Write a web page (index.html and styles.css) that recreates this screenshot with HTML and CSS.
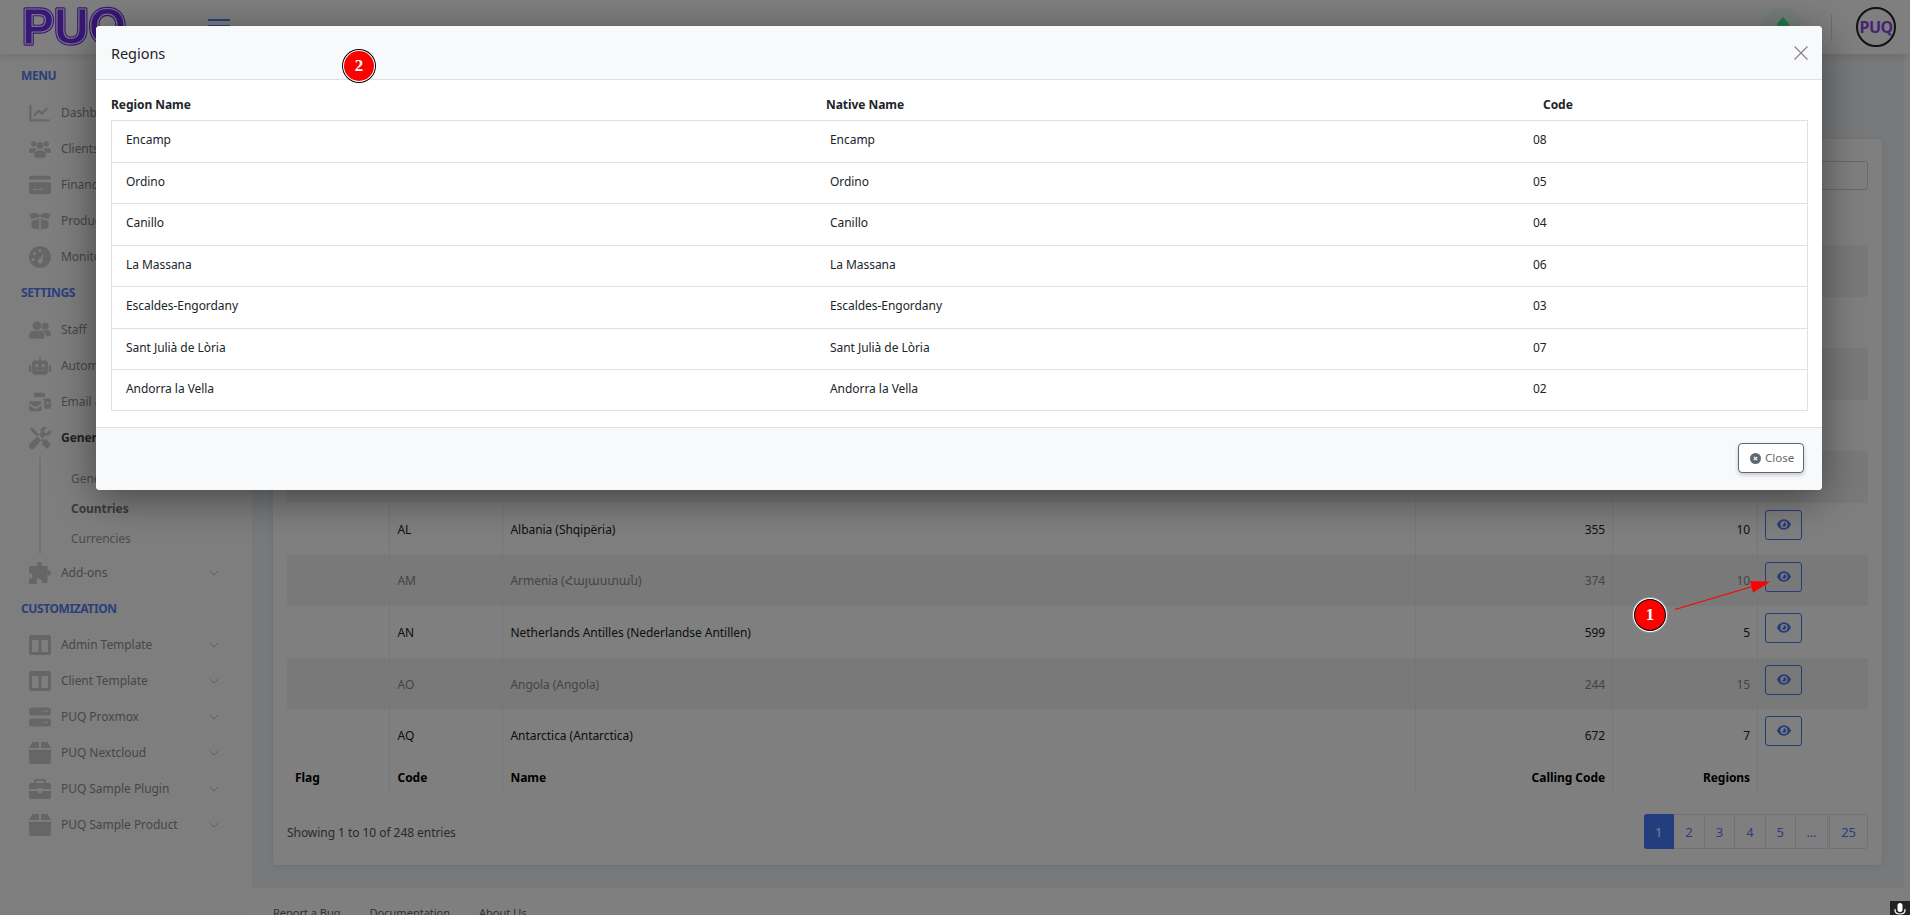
FILE: index.html
```html
<!DOCTYPE html>
<html lang="en">
<head>
<meta charset="utf-8">
<title>Countries</title>
<link rel="stylesheet" href="styles.css">
</head>
<body>
<svg class="sprite" aria-hidden="true">
  <symbol id="i-chart" viewBox="0 0 24 20"><path d="M1.500 1v17h21" fill="none" stroke="currentColor" stroke-width="2.400"/><path d="M5.500 13l5-5.500 3.500 3 6-6" fill="none" stroke="currentColor" stroke-width="2.400"/></symbol>
  <symbol id="i-users" viewBox="0 0 28 22"><circle cx="6" cy="4.500" r="3.400"/><circle cx="22" cy="4.500" r="3.400"/><circle cx="14" cy="6.500" r="4.400"/><path d="M0 14q0-4 4-4h4q1 0 2 1-3 2-3.500 5H1q-1 0-1-1zM28 14q0-4-4-4h-4q-1 0-2 1 3 2 3.500 5H27q1 0 1-1zM6.500 20q0-7 6-7h3q6 0 6 7 0 2-2 2h-11q-2 0-2-2z"/></symbol>
  <symbol id="i-card" viewBox="0 0 24 20"><path d="M0 3q0-3 3-3h18q3 0 3 3v1H0zM0 7h24v10q0 3-3 3H3q-3 0-3-3zM4 14v1.500h5V14zM11 14v1.500h4V14z" fill-rule="evenodd"/></symbol>
  <symbol id="i-box" viewBox="0 0 26 20"><path d="M0 2l7-2 6 3 6-3 7 2-3 6-10-3-10 3zM3 10l9-3v13l-7-1q-2 0-2-2zM23 10l-9-3v13l7-1q2 0 2-2z"/></symbol>
  <symbol id="i-gauge" viewBox="0 0 22 22"><path fill-rule="evenodd" d="M11 0a11 11 0 1 1 0 22a11 11 0 0 1 0-22zM11 3a1.500 1.500 0 1 0 0 3a1.500 1.500 0 0 0 0-3zM5.500 6a1.500 1.500 0 1 0 0 3a1.500 1.500 0 0 0 0-3zM4 12a1.500 1.500 0 1 0 0 3a1.500 1.500 0 0 0 0-3zM15 6l-3.800 6.500a2.500 2.500 0 1 0 2 1z"/></symbol>
  <symbol id="i-staff" viewBox="0 0 28 22"><circle cx="10" cy="5.500" r="5.500"/><circle cx="20.500" cy="6" r="4.500"/><path d="M0 19q0-7 6-7h8q6 0 6 7v1q0 2-2 2H2q-2 0-2-2zM17 12q1-1 3-1h3q5 0 5 6v1q0 1-1 1h-5q0-4-5-7z"/></symbol>
  <symbol id="i-robot" viewBox="0 0 28 22"><path fill-rule="evenodd" d="M13 0h2v4h6q3 0 3 3v12q0 3-3 3H7q-3 0-3-3V7q0-3 3-3h6zM10 8.500a2 2 0 1 0 0 4a2 2 0 0 0 0-4zM18 8.500a2 2 0 1 0 0 4a2 2 0 0 0 0-4zM9 16v1.500h2V16zM13 16v1.500h2V16zM17 16v1.500h2V16z"/><path d="M0 11q0-2 2-2h.800v10H2q-2 0-2-2zM28 11q0-2-2-2h-.800v10H26q2 0 2-2z"/></symbol>
  <symbol id="i-mail" viewBox="0 0 26 22"><path d="M6 0h11q2 0 2 2v3H6V2q0-2 0-2zM15 7h9q2 0 2 2v8q0 2-2 2h-6v-9q0-2-3-3zM21 11v2.500h2.500V11z"/><path d="M0 12q0-2 2-2h11q2 0 2 2v.500L7.500 17 0 12.500zM0 15l7.500 4.500L15 15v5q0 2-2 2H2q-2 0-2-2z"/></symbol>
  <symbol id="i-tools" viewBox="0 0 24 24"><path d="M1 0l4 2 11 12 3-1 5 6-4 5-6-5 1-3L3 5zM23 3l-3.500 3.500-2.500-.5-.500-2.500L20 0q-4-1-6 1-2 2-1 5L0 19q-1 2 1 4 2 2 4 1L18 9q4 1 5-1 1.500-2 0-5z"/></symbol>
  <symbol id="i-puzzle" viewBox="0 0 22 22"><path d="M8 2q0-2 2.500-2T13 2q0 1-.500 2h5q1 0 1 1v4q1-1 2-.500 1.500.500 1.500 2.500t-1.500 2.500q-1 .500-2-.500v7q0 1-1 1h-5q1-1 .500-2T10 16.500 7.500 18t.500 4H1q-1 0-1-1v-5q1 1 2 .500T3.500 14 2 11.500 0 12V5q0-1 1-1h7.500Q8 3 8 2z"/></symbol>
  <symbol id="i-columns" viewBox="0 0 22 20"><path fill-rule="evenodd" d="M2 0h18q2 0 2 2v16q0 2-2 2H2q-2 0-2-2V2q0-2 2-2zM3 5v12h6.500V5zM12.500 5v12H19V5z"/></symbol>
  <symbol id="i-server" viewBox="0 0 22 19"><path fill-rule="evenodd" d="M3 0h16q3 0 3 3v2q0 3-3 3H3Q0 8 0 5V3q0-3 3-3zM14 3v1.500h1.500V3zM17 3v1.500h1.500V3zM3 11h16q3 0 3 3v2q0 3-3 3H3q-3 0-3-3v-2q0-3 3-3zM14 14v1.500h1.500V14zM17 14v1.500h1.500V14z"/></symbol>
  <symbol id="i-pack" viewBox="0 0 20 20"><path d="M3 0h6v5.500H0zM11 0h6l3 5.500h-9zM0 7h20v11q0 2-2 2H2q-2 0-2-2z"/></symbol>
  <symbol id="i-brief" viewBox="0 0 22 20"><path fill-rule="evenodd" d="M7 0h8q2 0 2 2v2h3q2 0 2 2v4H13V9H9v1H0V6q0-2 2-2h3V2q0-2 2-2zM7 2v2h8V2zM0 12h9v2h4v-2h9v6q0 2-2 2H2q-2 0-2-2z"/></symbol>
  <symbol id="i-eye" viewBox="0 0 16 12"><path fill-rule="evenodd" d="M8 0c3.700 0 6.600 2.500 8 6-1.400 3.500-4.300 6-8 6S1.400 9.500 0 6c1.400-3.500 4.300-6 8-6zM8 2a4 4 0 1 0 0 8a4 4 0 0 0 0-8zM8 3.500a2.500 2.500 0 1 1-2.400 3.200c.9.300 2.500-.6 2-3.200z"/></symbol>
  <symbol id="i-chev" viewBox="0 0 10 6"><path d="M1 1l4 4 4-4" fill="none" stroke="currentColor" stroke-width="1"/></symbol>
</svg>

<div class="app">
  <header class="topbar">
    <div class="brand">
      <svg class="logo" viewBox="0 0 110 38"><text class="logo-outer" x="1" y="36" textLength="104" lengthAdjust="spacingAndGlyphs">PUQ</text><text class="logo-inner" x="1" y="36" textLength="104" lengthAdjust="spacingAndGlyphs">PUQ</text></svg>
      <button class="burger" aria-label="Menu"><span></span><span></span><span></span></button>
    </div>
    <div class="top-actions">
      <div class="status"><svg class="status-drop" viewBox="0 0 12 14"><path d="M6 0C8 3 12 5 12 9a6 5 0 0 1-12 0C0 5 4 3 6 0z"/></svg></div>
      <div class="divider"></div>
      <div class="avatar">PUQ</div>
    </div>
  </header>

  <aside class="sidebar">
    <div class="nav-title first">MENU</div>
    <a class="nav-item"><svg class="nav-icon"><use href="#i-chart"/></svg>Dashboard</a>
    <a class="nav-item"><svg class="nav-icon"><use href="#i-users"/></svg>Clients</a>
    <a class="nav-item"><svg class="nav-icon"><use href="#i-card"/></svg>Finance</a>
    <a class="nav-item"><svg class="nav-icon"><use href="#i-box"/></svg>Products</a>
    <a class="nav-item"><svg class="nav-icon"><use href="#i-gauge"/></svg>Monitoring</a>
    <div class="nav-title settings">SETTINGS</div>
    <a class="nav-item"><svg class="nav-icon"><use href="#i-staff"/></svg>Staff</a>
    <a class="nav-item"><svg class="nav-icon"><use href="#i-robot"/></svg>Automation</a>
    <a class="nav-item"><svg class="nav-icon"><use href="#i-mail"/></svg>Email &amp; Notifications</a>
    <a class="nav-item active"><svg class="nav-icon"><use href="#i-tools"/></svg>General</a>
    <div class="subnav">
      <a class="sub-item">General</a>
      <a class="sub-item active">Countries</a>
      <a class="sub-item">Currencies</a>
    </div>
    <a class="nav-item"><svg class="nav-icon"><use href="#i-puzzle"/></svg>Add-ons<svg class="chev"><use href="#i-chev"/></svg></a>
    <div class="nav-title">CUSTOMIZATION</div>
    <a class="nav-item"><svg class="nav-icon"><use href="#i-columns"/></svg>Admin Template<svg class="chev"><use href="#i-chev"/></svg></a>
    <a class="nav-item"><svg class="nav-icon"><use href="#i-columns"/></svg>Client Template<svg class="chev"><use href="#i-chev"/></svg></a>
    <a class="nav-item"><svg class="nav-icon"><use href="#i-server"/></svg>PUQ Proxmox<svg class="chev"><use href="#i-chev"/></svg></a>
    <a class="nav-item"><svg class="nav-icon"><use href="#i-pack"/></svg>PUQ Nextcloud<svg class="chev"><use href="#i-chev"/></svg></a>
    <a class="nav-item"><svg class="nav-icon"><use href="#i-brief"/></svg>PUQ Sample Plugin<svg class="chev"><use href="#i-chev"/></svg></a>
    <a class="nav-item"><svg class="nav-icon"><use href="#i-pack"/></svg>PUQ Sample Product<svg class="chev"><use href="#i-chev"/></svg></a>
  </aside>

  <div class="main">
    <main class="content">
      <section class="card">
        <div class="search-row"><input class="search" type="text" aria-label="Search"></div>
        <table class="countries">
          <colgroup><col class="c-flag"><col class="c-code"><col class="c-name"><col class="c-call"><col class="c-reg"><col class="c-act"></colgroup>
          <thead><tr><th>Flag</th><th>Code</th><th>Name</th><th class="num">Calling Code</th><th class="num">Regions</th><th></th></tr></thead>
          <tbody>
            <tr><td></td><td>AD</td><td>Andorra (Andorra)</td><td class="num">376</td><td class="num">7</td><td class="act"><button class="eye-btn"><svg class="eye"><use href="#i-eye"/></svg></button></td></tr>
            <tr><td></td><td>AE</td><td>United Arab Emirates</td><td class="num">971</td><td class="num">7</td><td class="act"><button class="eye-btn"><svg class="eye"><use href="#i-eye"/></svg></button></td></tr>
            <tr><td></td><td>AF</td><td>Afghanistan</td><td class="num">93</td><td class="num">34</td><td class="act"><button class="eye-btn"><svg class="eye"><use href="#i-eye"/></svg></button></td></tr>
            <tr><td></td><td>AG</td><td>Antigua and Barbuda</td><td class="num">1268</td><td class="num">6</td><td class="act"><button class="eye-btn"><svg class="eye"><use href="#i-eye"/></svg></button></td></tr>
            <tr><td></td><td>AI</td><td>Anguilla</td><td class="num">1264</td><td class="num">14</td><td class="act"><button class="eye-btn"><svg class="eye"><use href="#i-eye"/></svg></button></td></tr>
            <tr><td></td><td>AL</td><td>Albania (Shqipëria)</td><td class="num">355</td><td class="num">10</td><td class="act"><button class="eye-btn"><svg class="eye"><use href="#i-eye"/></svg></button></td></tr>
            <tr><td></td><td>AM</td><td>Armenia (Հայաստան)</td><td class="num">374</td><td class="num">10</td><td class="act"><button class="eye-btn"><svg class="eye"><use href="#i-eye"/></svg></button></td></tr>
            <tr><td></td><td>AN</td><td>Netherlands Antilles (Nederlandse Antillen)</td><td class="num">599</td><td class="num">5</td><td class="act"><button class="eye-btn"><svg class="eye"><use href="#i-eye"/></svg></button></td></tr>
            <tr><td></td><td>AO</td><td>Angola (Angola)</td><td class="num">244</td><td class="num">15</td><td class="act"><button class="eye-btn"><svg class="eye"><use href="#i-eye"/></svg></button></td></tr>
            <tr><td></td><td>AQ</td><td>Antarctica (Antarctica)</td><td class="num">672</td><td class="num">7</td><td class="act"><button class="eye-btn"><svg class="eye"><use href="#i-eye"/></svg></button></td></tr>
          </tbody>
          <tfoot><tr><th>Flag</th><th>Code</th><th>Name</th><th class="num">Calling Code</th><th class="num">Regions</th><th></th></tr></tfoot>
        </table>
        <div class="table-foot">
          <div class="info">Showing 1 to 10 of 248 entries</div>
          <nav class="pages">
            <a class="page current">1</a><a class="page">2</a><a class="page">3</a><a class="page">4</a><a class="page">5</a><a class="page dots">...</a><a class="page last">25</a>
          </nav>
        </div>
      </section>
    </main>
    <footer class="page-footer"><a>Report a Bug</a><a>Documentation</a><a>About Us</a></footer>
  </div>
</div>

<div class="backdrop">
  <div class="modal">
    <div class="modal-head">
      <h5 class="modal-title">Regions</h5>
      <button class="modal-x" aria-label="Close"><svg viewBox="0 0 14 14"><path d="M.5.5l13 13M13.500.5l-13 13" fill="none" stroke="currentColor" stroke-width="1.200"/></svg></button>
    </div>
    <div class="modal-body">
      <div class="reg-head"><span>Region Name</span><span>Native Name</span><span>Code</span></div>
      <div class="reg-list">
        <div class="reg-row"><span>Encamp</span><span>Encamp</span><span>08</span></div>
        <div class="reg-row"><span>Ordino</span><span>Ordino</span><span>05</span></div>
        <div class="reg-row"><span>Canillo</span><span>Canillo</span><span>04</span></div>
        <div class="reg-row"><span>La Massana</span><span>La Massana</span><span>06</span></div>
        <div class="reg-row"><span>Escaldes-Engordany</span><span>Escaldes-Engordany</span><span>03</span></div>
        <div class="reg-row"><span>Sant Julià de Lòria</span><span>Sant Julià de Lòria</span><span>07</span></div>
        <div class="reg-row"><span>Andorra la Vella</span><span>Andorra la Vella</span><span>02</span></div>
      </div>
    </div>
    <div class="modal-foot">
      <button class="close-btn"><svg class="close-icon" viewBox="0 0 12 12"><circle cx="6" cy="6" r="6"/><path class="close-x" d="M4.200 4.200l3.600 3.600M7.800 4.200l-3.600 3.600"/></svg>Close</button>
    </div>
  </div>
</div>

<div class="marker marker-1">1</div>
<div class="marker marker-2">2</div>
<svg class="arrow" viewBox="0 0 100 32"><path d="M1 30.500L80 7" stroke="#f00" stroke-width="1.300"/><path d="M96 2.700L76 2 79 13.700z" fill="#f00"/></svg>
<div class="mic"><svg viewBox="0 0 20 14"><rect x="7.500" y="2" width="5" height="9" rx="2.500" fill="#fff"/><path d="M5 8v1q0 4 5 4t5-4V8" fill="none" stroke="#fff" stroke-width="1.200"/></svg></div>
</body>
</html>
```
FILE: styles.css
```css
* { box-sizing: border-box; }
html, body { margin: 0; height: 100%; overflow: hidden; }
body {
  position: relative;
  font-family: "Noto Sans", "Open Sans", "DejaVu Sans", sans-serif;
  font-size: 12px;
  line-height: 20px;
  letter-spacing: -.05px;
  color: #212529;
  background: #fcfcfc;
}
.sprite { display: none; }
svg { fill: currentColor; }
a { color: inherit; text-decoration: none; }
button { font: inherit; }

.app {
  display: grid;
  grid-template-columns: 252px 1652px;
  grid-template-rows: 54px 861px;
  height: 915px;
}
.topbar {
  grid-column: 1 / 3;
  display: flex;
  justify-content: space-between;
  background: #fff;
  box-shadow: 0 2px 8px rgba(0,0,0,.12);
  position: relative;
  margin-right: -6px;
}
.brand { display: flex; align-items: flex-start; }
.logo { width: 110px; height: 38px; margin: 8px 0 0 21px; overflow: visible; }
.logo text { font-family: "Liberation Sans", sans-serif; font-weight: 700; font-size: 50px; stroke-linejoin: round; }
.logo-outer { fill: #6f2ef0; stroke: #6f2ef0; stroke-width: 3.500px; }
.logo-inner { fill: none; stroke: #f2eafe; stroke-width: 1.200px; }
.burger { display: flex; flex-direction: column; gap: 4px; width: 22px; margin: 19px 0 0 77px; padding: 0; border: 0; background: none; }
.burger span { display: block; height: 2px; background: #5680f5; }
.top-actions { display: flex; align-items: flex-start; padding-right: 14px; }
.status { width: 39px; height: 39px; margin-top: 7px; border-radius: 50%; background: #ebfff3; display: flex; justify-content: center; padding-top: 10px; }
.status-drop { width: 12px; height: 14px; color: #42f49c; }
.divider { width: 1px; height: 27px; margin: 14px 24px 0 29px; background: #ddd; }
.avatar { width: 40px; height: 40px; margin-top: 7px; border: 2px solid #222; border-radius: 50%; color: #8a4be8; font-weight: 700; font-size: 16px; line-height: 36px; text-align: center; letter-spacing: -.6px; background: #fff; white-space: nowrap; }

.sidebar { background: #fdfdfd; padding: 12px 0 0 21px; color: #8e8e8e; }
.nav-title { height: 36px; line-height: 36px; font-weight: 700; letter-spacing: -.4px; color: #5680f5; }
.nav-title.first { height: 20px; line-height: 20px; margin-bottom: 9px; }
.nav-title.settings { height: 37px; }
.nav-item { display: flex; align-items: center; height: 36px; padding-left: 8px; position: relative; white-space: nowrap; }
.nav-item.active { font-weight: 700; color: #444; }
.nav-icon { width: 22px; height: 22px; margin-right: 10px; color: #ccc; flex: none; }
.chev { position: absolute; left: 188px; width: 10px; height: 6px; color: #bbb; }
.subnav { position: relative; padding: 8px 0 0 50px; height: 99px; }
.subnav::before { content: ""; position: absolute; left: 18px; top: 1px; bottom: 1px; width: 2px; background: #e0e8f4; }
.sub-item { display: block; height: 30px; line-height: 30px; color: #999; }
.sub-item.active { font-weight: 700; color: #777; }

.main { display: flex; flex-direction: column; background: #f0f2f6; }
.content { flex: 1; padding: 85px 22px 0 21px; }
.card { background: #fff; border-radius: 4px; padding: 22px 14px 16px 14px; height: 726px; box-shadow: 0 1px 6px rgba(0,0,0,.08); }
.search-row { display: flex; justify-content: flex-end; height: 29px; }
.search { width: 230px; height: 29px; border: 1px solid #ced4da; border-radius: 3px; background: #fff; }
.countries { table-layout: fixed; border-collapse: collapse; width: 1581px; margin-top: 15px; }
.c-flag { width: 102px; } .c-code { width: 113px; } .c-name { width: 913px; }
.c-call { width: 197.6px; } .c-reg { width: 145px; } .c-act { width: 110.4px; }
.countries th, .countries td { padding: 2px 7px 0 8px; border-left: 1px solid #e9ecef; text-align: left; }
.countries th:first-child, .countries td:first-child { border-left: 0; }
.countries thead tr { height: 40px; }
.countries tfoot tr { height: 33px; }
.countries th { font-weight: 700; color: #000; }
.countries tbody tr { height: 51.6px; color: #222; }
.countries tbody tr:nth-child(odd) { background: #f2f2f2; color: #8a8a8a; }
.countries .num { text-align: right; }
.countries .act { vertical-align: top; padding: 7px 0 0 7px; }
.eye-btn { display: flex; align-items: center; justify-content: center; width: 37px; height: 30px; padding: 0 0 1px; border: 1px solid #4a78f5; border-radius: 3px; background: transparent; color: #4a78f5; }
.eye { width: 14px; height: 11px; }
.table-foot { display: flex; justify-content: space-between; align-items: center; margin-top: 20px; }
.info { color: #555; padding-top: 3px; }
.pages { display: flex; font-size: 13px; }
.page { height: 35px; padding: 2px 11px 0; line-height: 31px; border: 1px solid #dee2e6; border-left: 0; color: #5680f5; }
.page.current { background: #467cff; border-color: #467cff; color: #fff; border-radius: 3px 0 0 3px; }
.page.dots { padding: 2px 10.500px 0; }
.page.last { border-radius: 0 3px 3px 0; border-left: 1px solid #dee2e6; margin-left: 1px; }
.page-footer { display: flex; gap: 29px; height: 28px; padding: 15px 0 0 21px; border-top: 1px solid #eee; background: #fff; color: #666; font-size: 11.100px; white-space: nowrap; }

.backdrop { position: absolute; inset: 0; z-index: 2; background: rgba(0,0,0,.5); padding: 26px 88px 0 96px; }
.modal { width: 1726px; height: 464px; background: #fff; border-radius: 4px; box-shadow: 0 8px 40px rgba(0,0,0,.45); display: flex; flex-direction: column; }
.modal-head { display: flex; justify-content: space-between; height: 54px; padding: 16px 14px 0 15px; background: #f8f9fb; border-bottom: 1px solid #dee2e6; border-radius: 4px 4px 0 0; }
.modal-title { margin: 0; font-size: 14.500px; font-weight: 400; line-height: 22px; }
.modal-x { width: 14px; height: 14px; margin-top: 4px; padding: 0; border: 0; background: none; color: #888; }
.modal-x svg { display: block; width: 14px; height: 14px; }
.modal-body { flex: 1; padding: 15px 14px 0 15px; }
.reg-head { display: grid; grid-template-columns: 715px 717px 1fr; height: 25px; font-weight: 700; }
.reg-list { border: 1px solid #dee2e6; }
.reg-row { display: grid; grid-template-columns: 704px 703px 1fr; height: 41.57px; padding: 9px 0 0 14px; border-bottom: 1px solid #dee2e6; }
.reg-row:last-child { border-bottom: 0; height: 40px; }
.modal-foot { display: flex; justify-content: flex-end; height: 63px; padding: 15px 18px 0 0; background: #f8f9fb; border-top: 1px solid #dee2e6; border-radius: 0 0 4px 4px; }
.close-btn { display: flex; align-items: center; gap: 4px; height: 30px; width: 66px; padding: 0 0 0 11px; border: 1px solid #5f6870; border-radius: 4px; background: #fff; color: #5f6870; font-size: 11.500px; box-shadow: 0 2px 4px rgba(0,0,0,.2); }
.close-icon { width: 11px; height: 11px; flex: none; }
.close-x { fill: none; stroke: #fff; stroke-width: 1.300; }

.marker { position: absolute; z-index: 3; width: 30px; height: 30px; border-radius: 50%; background: #f00; color: #fff; font: 700 17px/30px "Liberation Serif", serif; text-align: center; box-shadow: 0 0 0 1px #fff, 0 0 0 2px #000; }
.marker-1 { left: 1635px; top: 600px; box-shadow: 0 0 0 1px #000, 0 0 0 2px #fff, 0 0 0 3px #999; }
.marker-2 { left: 344px; top: 51px; }
.arrow { position: absolute; z-index: 3; left: 1674px; top: 578.500px; width: 100px; height: 32px; }
.mic { position: absolute; z-index: 3; right: 0; bottom: 0; width: 20px; height: 14px; background: #222; }
.mic svg { display: block; width: 20px; height: 14px; }
```
